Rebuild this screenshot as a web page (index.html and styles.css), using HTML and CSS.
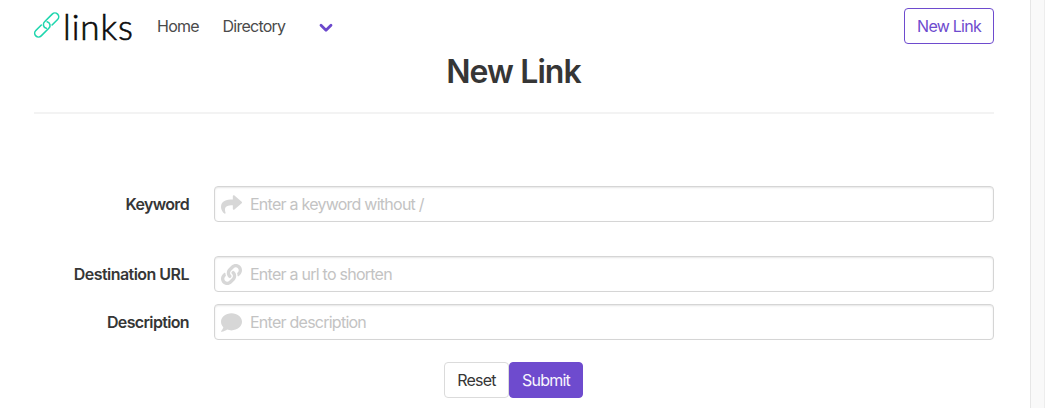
FILE: index.html
```html
<!DOCTYPE html>
<html lang="en">
<head>
<meta charset="utf-8">
<title>New Link</title>
<link rel="stylesheet" href="styles.css">
</head>
<body>
<main class="page">
  <nav class="navbar">
    <a class="brand">
      <svg class="brand-icon" viewBox="0 0 26 28">
        <g transform="translate(12.7 14) rotate(-45)">
          <path d="M-2.6 2A3.8 3.8 0 0 1 .8-3.8H11.6a3.8 3.8 0 0 1 0 7.6H3.8"/>
          <path d="M2.6-2A3.8 3.8 0 0 1-.8 3.8H-11.6a3.8 3.8 0 0 1 0-7.6H-3.8"/>
        </g>
      </svg>
      <span class="brand-text">links</span>
    </a>
    <a class="nav-item home">Home</a>
    <a class="nav-item directory">Directory</a>
    <svg class="chevron" viewBox="0 0 14 10"><path d="M2 2.2 7 7.2l5-5"/></svg>
    <a class="button outlined">New Link</a>
  </nav>
  <h1 class="title">New Link</h1>
  <hr class="divider">
  <form class="form">
    <div class="field keyword">
      <label class="label" for="keyword">Keyword</label>
      <div class="control">
        <svg class="icon" viewBox="0 0 512 512"><path d="M503.691 189.836L327.687 37.851C312.281 24.546 288 35.347 288 56.015v80.053C127.371 137.907 0 170.1 0 322.326c0 61.441 39.581 122.309 83.333 154.132 13.653 9.931 33.111-2.533 28.077-18.631C66.066 312.814 132.917 274.316 288 272.085V360c0 20.7 24.3 31.453 39.687 18.164l176.004-152c11.071-9.562 11.086-26.753 0-36.328z"/></svg>
        <input class="input" id="keyword" placeholder="Enter a keyword without /">
      </div>
    </div>
    <div class="field">
      <label class="label url-label" for="url">Destination URL</label>
      <div class="control">
        <svg class="icon" viewBox="0 0 512 512"><path d="M326.612 185.391c59.747 59.809 58.927 155.698.36 214.59-.11.12-.24.25-.36.37l-67.2 67.2c-59.27 59.27-155.699 59.262-214.96 0-59.27-59.26-59.27-155.7 0-214.96l37.106-37.106c9.84-9.84 26.786-3.3 27.294 10.606.648 17.722 3.826 35.527 9.69 52.721 1.986 5.822.567 12.262-3.783 16.612l-13.087 13.087c-28.026 28.026-28.905 73.66-1.155 101.96 28.024 28.579 74.086 28.749 102.325.51l67.2-67.19c28.191-28.191 28.073-73.757 0-101.83-3.701-3.694-7.429-6.564-10.341-8.569a16.037 16.037 0 0 1-6.947-12.606c-.396-10.567 3.348-21.456 11.698-29.806l21.054-21.055c5.521-5.521 14.182-6.199 20.584-1.731a152.482 152.482 0 0 1 20.522 17.197zM467.547 44.449c-59.261-59.262-155.69-59.27-214.96 0l-67.2 67.2c-.12.12-.25.25-.36.37-58.566 58.892-59.387 154.781.36 214.59a152.454 152.454 0 0 0 20.521 17.196c6.402 4.468 15.064 3.789 20.584-1.731l21.054-21.055c8.35-8.35 12.094-19.239 11.698-29.806a16.037 16.037 0 0 0-6.947-12.606c-2.912-2.005-6.64-4.875-10.341-8.569-28.073-28.073-28.191-73.639 0-101.83l67.2-67.19c28.239-28.239 74.3-28.069 102.325.51 27.75 28.3 26.872 73.934-1.155 101.96l-13.087 13.087c-4.35 4.35-5.769 10.79-3.783 16.612 5.864 17.194 9.042 34.999 9.69 52.721.509 13.906 17.454 20.446 27.294 10.606l37.106-37.106c59.271-59.259 59.271-155.699.001-214.959z"/></svg>
        <input class="input" id="url" placeholder="Enter a url to shorten">
      </div>
    </div>
    <div class="field">
      <label class="label" for="description">Description</label>
      <div class="control">
        <svg class="icon" viewBox="0 0 512 512"><path d="M256 32C114.6 32 0 125.1 0 240c0 49.6 21.4 95 57 130.7C44.5 421.1 2.7 466 2.2 466.5c-2.2 2.3-2.8 5.7-1.5 8.7S4.8 480 8 480c66.3 0 116-31.8 140.6-51.4 32.7 12.3 69 19.4 107.4 19.4 141.4 0 256-93.1 256-208S397.4 32 256 32z"/></svg>
        <input class="input" id="description" placeholder="Enter description">
      </div>
    </div>
    <div class="actions">
      <button class="button reset" type="reset">Reset</button>
      <button class="button submit" type="button">Submit</button>
    </div>
  </form>
</main>
<div class="gutter"></div>
</body>
</html>
```
FILE: styles.css
```css
* { box-sizing: border-box; }
body {
  margin: 0;
  height: 408px;
  display: flex;
  overflow: hidden;
  background: #fff;
  color: #363636;
  font: 16px/24px Inter, "Liberation Sans", sans-serif;
  letter-spacing: -0.75px;
}
.page { width: 1030px; padding: 0 36px 0 34px; }
.gutter {
  width: 15px;
  background: #f9f9f9;
  border-left: 1px solid #e6e6e6;
  border-right: 1px solid #ededed;
}
.navbar { display: flex; align-items: center; height: 52px; }
.brand { display: flex; width: 123px; align-items: center; color: #0a0a0a; }
.brand-icon {
  width: 26px;
  height: 28px;
  margin: -3px 3px 0 0;
  overflow: visible;
  fill: none;
  stroke: #1fd6ae;
  stroke-width: 1.6;
  stroke-linecap: round;
}
.brand-text { margin-top: -1px; font: 300 35px/40px Lato, sans-serif; letter-spacing: 0.9px; -webkit-text-stroke: 0.6px #0a0a0a; }
.nav-item { color: #4a4a4a; white-space: nowrap; }
.home { width: 65.5px; }
.directory { width: 96.5px; }
.chevron { width: 14px; height: 10px; margin-top: 3px; fill: none; stroke: #6b48cc; stroke-width: 2.8; stroke-linecap: round; stroke-linejoin: round; }
.button {
  height: 36px;
  padding: 0;
  display: flex;
  align-items: center;
  justify-content: center;
  border: 1px solid #dbdbdb;
  border-radius: 4px;
  background: #fff;
  color: #363636;
  font: inherit;
  letter-spacing: inherit;
}
.outlined { width: 90px; margin-left: auto; border-color: #6e4bce; color: #6e4bce; }
.title { margin: 1px 1px 0 0; padding-top: 1px; text-align: center; font-size: 32px; line-height: 35px; font-weight: 600; letter-spacing: -0.9px; }
.divider { height: 2px; margin: 23px 0 72px; border: 0; background: #f3f3f3; }
.field { display: flex; height: 36px; margin-bottom: 12px; }
.keyword { margin-bottom: 34px; }
.label { width: 155px; margin-right: 25px; padding-top: 6px; text-align: right; font-weight: 600; letter-spacing: -0.65px; }
.url-label { letter-spacing: -0.53px; }
.control { display: flex; flex: 1; align-items: center; height: 36px; padding-left: 6px; border: 1px solid #d5d5d5; border-radius: 4px; box-shadow: inset 0 1px 2px rgba(10, 10, 10, .1); }
.icon { width: 21px; height: 21px; fill: #d7d7d7; }
.input { flex: 1; height: 30px; margin-left: 8px; padding: 0; border: 0; outline: 0; background: transparent; font: inherit; letter-spacing: inherit; }
.input::placeholder { color: #c3c3c3; opacity: 1; }
.actions { display: flex; justify-content: center; margin: 22px 1px 0 0; }
.reset { width: 65px; }
.submit { width: 74px; background: #6e4bce; border-color: #6e4bce; color: #f8f6fd; }
```
